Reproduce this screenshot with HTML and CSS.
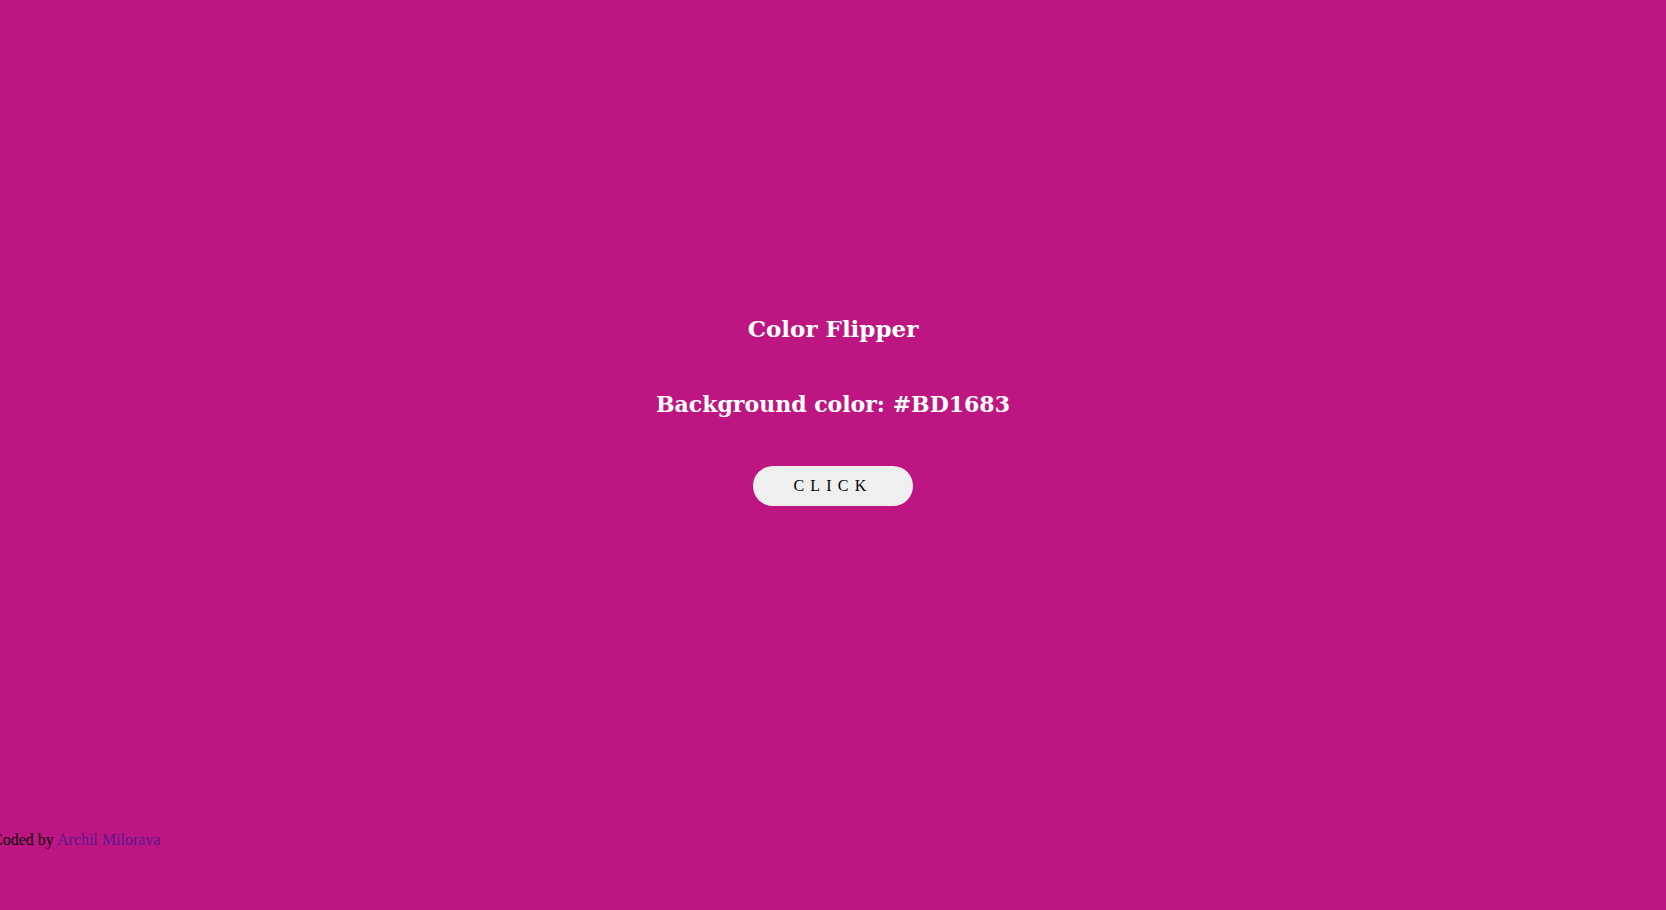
FILE: index.html
```html
<!DOCTYPE html>
<html lang="en">
<head>
<meta charset="utf-8">
<title>Color Flipper</title>
<link rel="stylesheet" href="styles.css">
</head>
<body>
<main class="flipper">
  <h2 class="title">Color Flipper</h2>
  <h2 class="color-line">Background color: <span class="code">#BD1683</span></h2>
  <button class="btn" type="button">CLICK</button>
</main>
<footer class="credit">Coded by <a class="credit-link" href="#">Archil Milorava</a></footer>
</body>
</html>
```
FILE: styles.css
```css
html, body {
  margin: 0;
  padding: 0;
}
body {
  background: #BD1683;
  height: 910px;
  display: flex;
  flex-direction: column;
  font-family: "Liberation Serif", "Times New Roman", serif;
  overflow: hidden;
}
.flipper {
  display: flex;
  flex-direction: column;
  align-items: center;
  padding-top: 313px;
}
.title, .color-line {
  font-family: "DejaVu Serif", Georgia, serif;
  font-weight: bold;
  color: #ffffff;
  font-size: 22px;
  line-height: 32px;
  margin: 0;
}
.title {
  font-size: 23px;
}
.color-line {
  margin-top: 43px;
}
.btn {
  margin-top: 46px;
  width: 160px;
  height: 40px;
  border: none;
  border-radius: 20px;
  background: #efefef;
  font-family: "Liberation Serif", "Times New Roman", serif;
  font-size: 16px;
  letter-spacing: 6.2px;
  padding: 0;
  color: #000;
}
.credit {
  margin-top: auto;
  margin-bottom: 61px;
  margin-left: -8px;
  font-size: 16px;
  color: #000;
}
.credit-link {
  color: #551A8B;
  text-decoration: none;
}
```
